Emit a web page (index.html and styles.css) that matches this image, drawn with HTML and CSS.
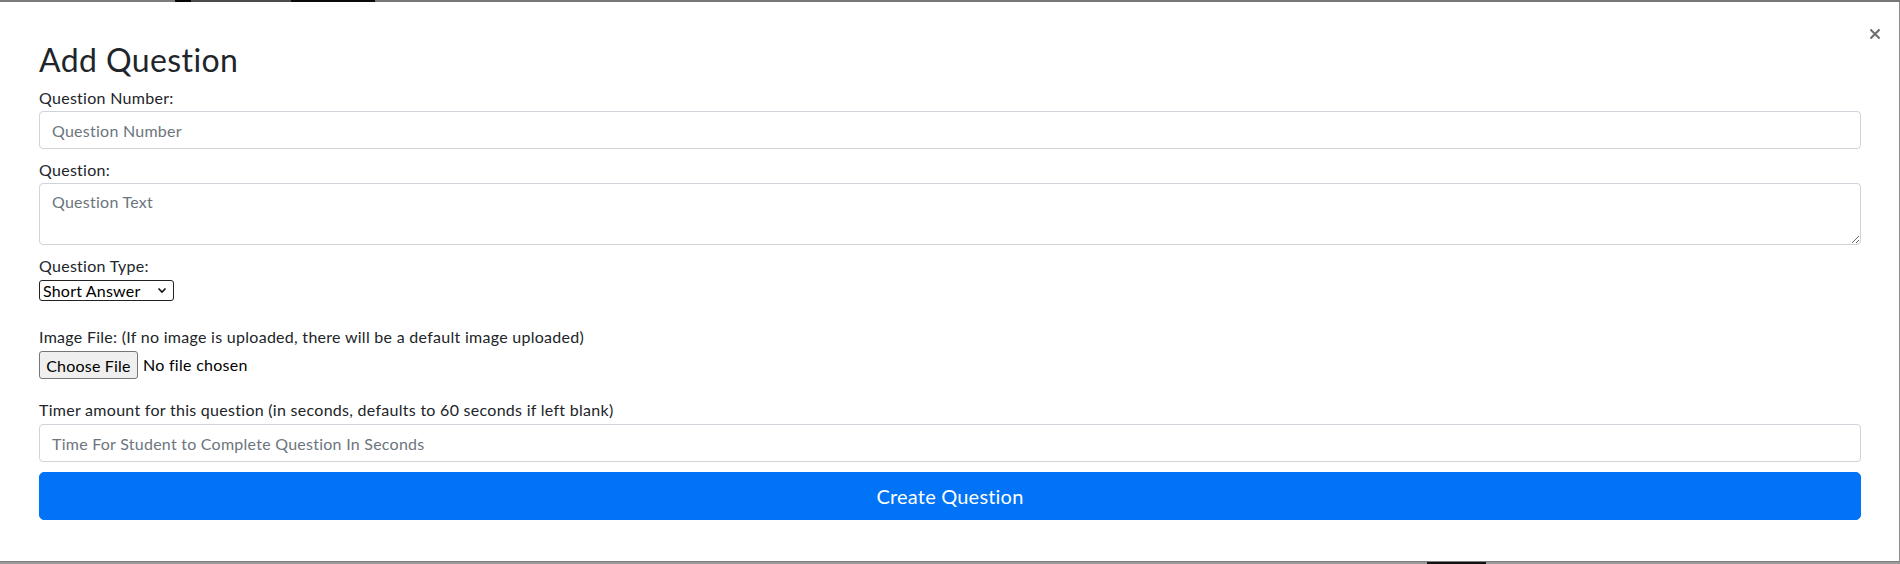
FILE: index.html
```html
<!DOCTYPE html>
<html lang="en">
<head>
<meta charset="utf-8">
<title>Add Question</title>
<link rel="stylesheet" href="styles.css">
</head>
<body>
<div class="strip strip-top">
  <span class="seg seg-a"></span>
  <span class="seg seg-b"></span>
  <span class="seg seg-c"></span>
  <span class="seg seg-d"></span>
  <span class="seg seg-e"></span>
</div>
<div class="modal">
  <button type="button" class="close" aria-label="Close">
    <svg width="10" height="10" viewBox="0 0 10 10"><path d="M1.2 1.2 L8.8 8.8 M8.8 1.2 L1.2 8.8" stroke="#707070" stroke-width="2.2" stroke-linecap="square"/></svg>
  </button>
  <h2 class="title">Add Question</h2>
  <form class="form">
    <label class="lbl lbl-first">Question Number:</label>
    <input class="control" type="text" placeholder="Question Number">

    <label class="lbl lbl-gap">Question:</label>
    <textarea class="control area" rows="2" placeholder="Question Text"></textarea>

    <label class="lbl lbl-gap3">Question Type:</label>
    <div class="select-wrap">
      <select class="select">
        <option>Short Answer</option>
        <option>Multiple Choice</option>
      </select>
      <svg class="chev" width="10" height="7" viewBox="0 0 10 7"><path d="M1.5 1.5 L5 5 L8.5 1.5" fill="none" stroke="#111" stroke-width="1.6"/></svg>
    </div>

    <label class="lbl lbl-gap4">Image File: (If no image is uploaded, there will be a default image uploaded)</label>
    <div class="file-row">
      <button type="button" class="file-btn">Choose File</button>
      <span class="file-name">No file chosen</span>
    </div>

    <label class="lbl lbl-gap5">Timer amount for this question (in seconds, defaults to 60 seconds if left blank)</label>
    <input class="control" type="text" placeholder="Time For Student to Complete Question In Seconds">

    <button type="button" class="submit">Create Question</button>
  </form>
</div>
<div class="strip strip-bottom">
  <span class="bseg bseg-a"></span>
  <span class="bseg bseg-b"></span>
  <span class="bseg bseg-c"></span>
</div>
</body>
</html>
```
FILE: styles.css
```css
* { box-sizing: border-box; }

html, body {
  margin: 0;
  padding: 0;
  height: 564px;
  overflow: hidden;
}

body {
  background: #8c8c8c;
  font-family: Lato, "Open Sans", sans-serif;
  color: #212529;
  font-size: 16px;
  line-height: 24px;
  letter-spacing: 0.28px;
}

.strip { display: flex; }

.strip-top { height: 2px; background: #7a7a7a; }
.seg { display: block; height: 2px; }
.seg-a { width: 175px; background: #7c7c7c; }
.seg-b { width: 16px; background: #050505; }
.seg-c { width: 100px; background: #4a4a4a; }
.seg-d { width: 84px; background: #0a0a0a; }
.seg-e { flex: 1; background: #787878; }

.strip-bottom { height: 3px; background: #9a9a9a; border-top: 1px solid #7d7d7d; }
.bseg { display: block; height: 2px; }
.bseg-a { width: 1427px; }
.bseg-b { width: 59px; background: #111; }
.bseg-c { flex: 1; }

.modal {
  position: relative;
  height: 559px;
  width: 1899px;
  background: #fff;
  padding: 39px 38px 0 39px;
}

.close {
  position: absolute;
  top: 25px;
  right: 17px;
  width: 14px;
  height: 14px;
  padding: 2px;
  border: 0;
  background: transparent;
  display: flex;
  align-items: center;
  justify-content: center;
  cursor: pointer;
}

.title {
  margin: 0;
  font-size: 32px;
  line-height: 38px;
  font-weight: 400;
  letter-spacing: 0.4px;
  color: #212529;
}

.form {
  display: flex;
  flex-direction: column;
  align-items: flex-start;
}

.lbl {
  display: block;
  line-height: 24px;
  font-size: 16px;
  color: #212529;
}

.lbl-first { margin-top: 7px; margin-bottom: 1px; }
.lbl-gap { margin-top: 9px; margin-bottom: 1px; }
.lbl-gap3 { margin-top: 9px; margin-bottom: 2px; }
.lbl-gap4 { margin-top: 24px; margin-bottom: 2px; }
.lbl-gap5 { margin-top: 19px; margin-bottom: 2px; }

.control {
  display: block;
  width: 100%;
  height: 38px;
  padding: 6px 12px;
  font-family: inherit;
  font-size: 16px;
  line-height: 24px;
  letter-spacing: 0.25px;
  color: #495057;
  background: #fff;
  border: 1px solid #ced4da;
  border-radius: 4px;
  outline: none;
}

.control::placeholder { color: #6c757d; opacity: 1; }

.area {
  height: 62px;
  resize: vertical;
}

.select-wrap {
  position: relative;
  width: 135px;
  height: 21px;
}

.select {
  appearance: none;
  -webkit-appearance: none;
  display: block;
  width: 135px;
  height: 21px;
  margin: 0;
  padding: 0 20px 0 3px;
  font-family: inherit;
  font-size: 16px;
  line-height: 19px;
  letter-spacing: 0.2px;
  color: #000;
  background: #fff;
  border: 1px solid #222;
  border-radius: 3px;
}

.chev {
  position: absolute;
  right: 7px;
  top: 7px;
  pointer-events: none;
}

.file-row {
  display: flex;
  align-items: center;
  gap: 5px;
  height: 28px;
}

.file-btn {
  height: 28px;
  width: 99px;
  padding: 0 6px;
  font-family: inherit;
  font-size: 16px;
  letter-spacing: 0.2px;
  color: #000;
  background: #efefef;
  border: 1px solid #767676;
  border-radius: 3px;
}

.file-name {
  font-size: 16px;
  color: #000;
}

.submit {
  display: block;
  width: 100%;
  height: 48px;
  margin-top: 10px;
  padding: 8px 16px;
  font-family: inherit;
  font-size: 20px;
  line-height: 30px;
  letter-spacing: 0.2px;
  color: #fff;
  background: #0073f7;
  border: 1px solid #0073f7;
  border-radius: 5px;
  cursor: pointer;
}
```
